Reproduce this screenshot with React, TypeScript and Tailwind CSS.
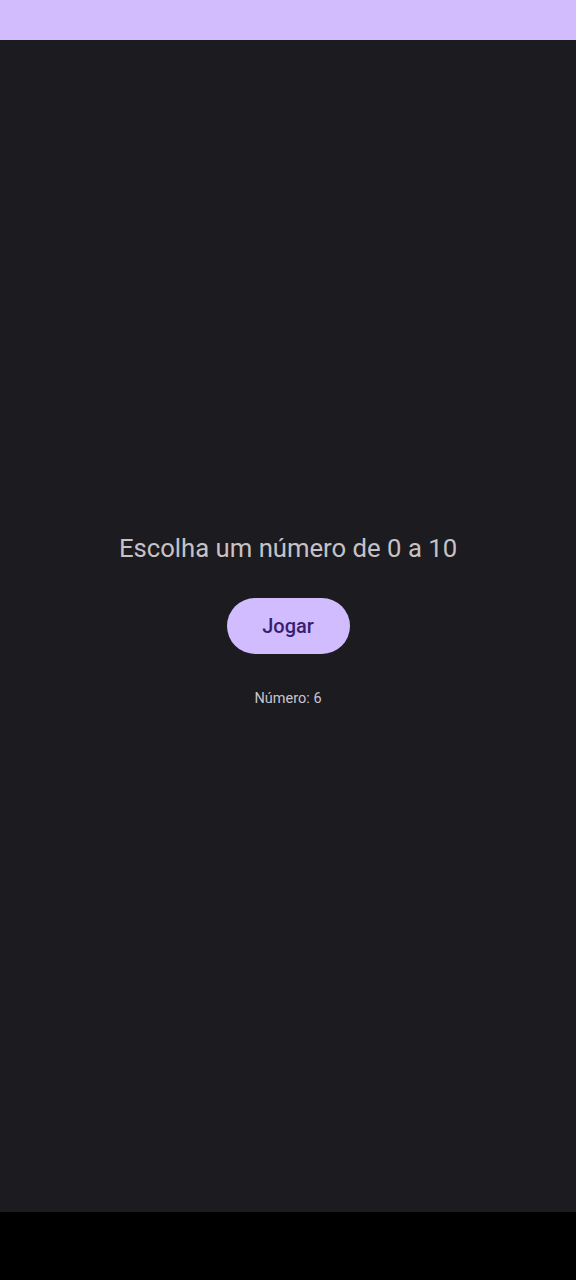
import React, { useState } from 'react';

const App: React.FC = () => {
  const [numero, setNumero] = useState(6);

  return (
    <div className="flex h-[1280px] w-full flex-col bg-black font-['Roboto',sans-serif]">
      <div className="h-[40px] bg-[#d2bcfe]"></div>
      <main className="flex flex-1 flex-col items-center justify-center bg-[#1c1b1f] pb-[13px]">
        <h1 className="text-[25.7px] leading-[34px] text-[#e6e1e5]/85">Escolha um número de 0 a 10</h1>
        <button
          onClick={() => setNumero(Math.floor(Math.random() * 11))}
          className="mt-[33px] h-[56px] w-[123px] rounded-full bg-[#d0bcff] text-[20px] font-medium text-[#381e72]"
        >
          Jogar
        </button>
        <p className="mt-[35px] text-[14.5px] leading-[20px] text-[#cac4d0]">Número: {numero}</p>
      </main>
      <div className="h-[68px] bg-black"></div>
    </div>
  );
};

export default App;
